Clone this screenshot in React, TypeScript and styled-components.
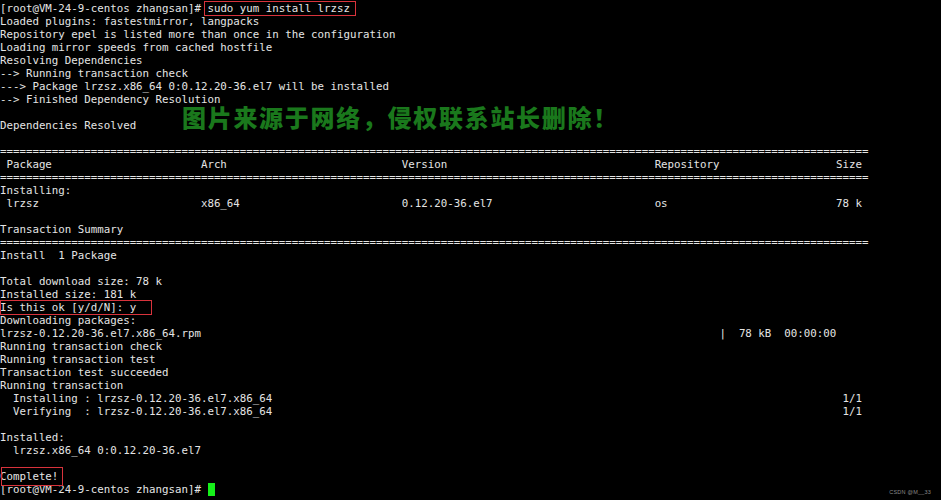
import React from "react";
import styled, { createGlobalStyle } from "styled-components";

const Global = createGlobalStyle`
  html, body { margin: 0; padding: 0; background: #000; }
  #root { width: 941px; height: 500px; }
`;

const Screen = styled.div`
  position: relative;
  width: 941px;
  height: 500px;
  overflow: hidden;
  background: #000;
  padding-top: 1.5px;
  box-sizing: border-box;
`;

const Line = styled.div`
  font-family: "DejaVu Sans Mono", "Liberation Mono", monospace;
  font-size: 10.77px;
  line-height: 13px;
  height: 13px;
  color: #e4e4e4;
  white-space: pre;
`;

const Boxed = styled.span<{ $extra: number; $top: number; $bottom: number; $left: number }>`
  position: relative;
  &::after {
    content: "";
    position: absolute;
    left: ${(p) => p.$left}px;
    right: ${(p) => -p.$extra}px;
    top: ${(p) => p.$top}px;
    bottom: ${(p) => p.$bottom}px;
    border: 1.5px solid #d8333c;
    pointer-events: none;
  }
`;

const Cursor = styled.span`
  display: inline-block;
  width: 7px;
  height: 13px;
  vertical-align: top;
  background: #16f01a;
  margin-left: 1px;
`;

const Watermark = styled.div`
  position: absolute;
  left: 182px;
  top: 105.5px;
  font-family: "Noto Sans CJK SC", sans-serif;
  font-weight: 900;
  font-size: 24px;
  line-height: 22px;
  letter-spacing: 1.7px;
  color: #1a781c;
  white-space: nowrap;
`;

const Credit = styled.div`
  position: absolute;
  right: 10px;
  bottom: 5px;
  font-family: "Liberation Sans", sans-serif;
  font-size: 5.5px;
  color: #8a8a8a;
  letter-spacing: 0.2px;
`;

const pad = (s: string, n: number) => s + " ".repeat(Math.max(0, n - s.length));
const eq = "=".repeat(134);

const row = (a: string, b: string, c: string, d: string, e: string) =>
  pad(pad(pad(pad(a, 31) + b, 62) + c, 101) + d, 133 - e.length) + e;

const dl = pad("lrzsz-0.12.20-36.el7.x86_64.rpm", 111) + "|  78 kB  00:00:00";
const step = (s: string) => pad(s, 130) + "1/1";

const lines: (string | null)[] = [
  null,
  "Loaded plugins: fastestmirror, langpacks",
  "Repository epel is listed more than once in the configuration",
  "Loading mirror speeds from cached hostfile",
  "Resolving Dependencies",
  "--> Running transaction check",
  "---> Package lrzsz.x86_64 0:0.12.20-36.el7 will be installed",
  "--> Finished Dependency Resolution",
  "",
  "Dependencies Resolved",
  "",
  eq,
  row(" Package", "Arch", "Version", "Repository", "Size"),
  eq,
  "Installing:",
  row(" lrzsz", "x86_64", "0.12.20-36.el7", "os", "78 k"),
  "",
  "Transaction Summary",
  eq,
  "Install  1 Package",
  "",
  "Total download size: 78 k",
  "Installed size: 181 k",
  null,
  "Downloading packages:",
  dl,
  "Running transaction check",
  "Running transaction test",
  "Transaction test succeeded",
  "Running transaction",
  step("  Installing : lrzsz-0.12.20-36.el7.x86_64"),
  step("  Verifying  : lrzsz-0.12.20-36.el7.x86_64"),
  "",
  "Installed:",
  "  lrzsz.x86_64 0:0.12.20-36.el7",
  "",
  null,
  null,
];

export default function App() {
  return (
    <>
      <Global />
      <Screen>
        {lines.map((l, i) => {
          if (i === 0)
            return (
              <Line key={i}>
                [root@VM-24-9-centos zhangsan]#{" "}
                <Boxed $left={-3} $extra={6} $top={-1} $bottom={-1}>
                  sudo yum install lrzsz
                </Boxed>
              </Line>
            );
          if (i === 23)
            return (
              <Line key={i}>
                <Boxed $left={0} $extra={16} $top={-1} $bottom={-1}>
                  Is this ok [y/d/N]: y
                </Boxed>
              </Line>
            );
          if (i === 36)
            return (
              <Line key={i}>
                <Boxed $left={1} $extra={5} $top={-3} $bottom={-3}>
                  Complete!
                </Boxed>
              </Line>
            );
          if (i === 37)
            return (
              <Line key={i}>
                [root@VM-24-9-centos zhangsan]# <Cursor />
              </Line>
            );
          return <Line key={i}>{l}</Line>;
        })}
        <Watermark>图片来源于网络，侵权联系站长删除！</Watermark>
        <Credit>CSDN @M__33</Credit>
      </Screen>
    </>
  );
}
